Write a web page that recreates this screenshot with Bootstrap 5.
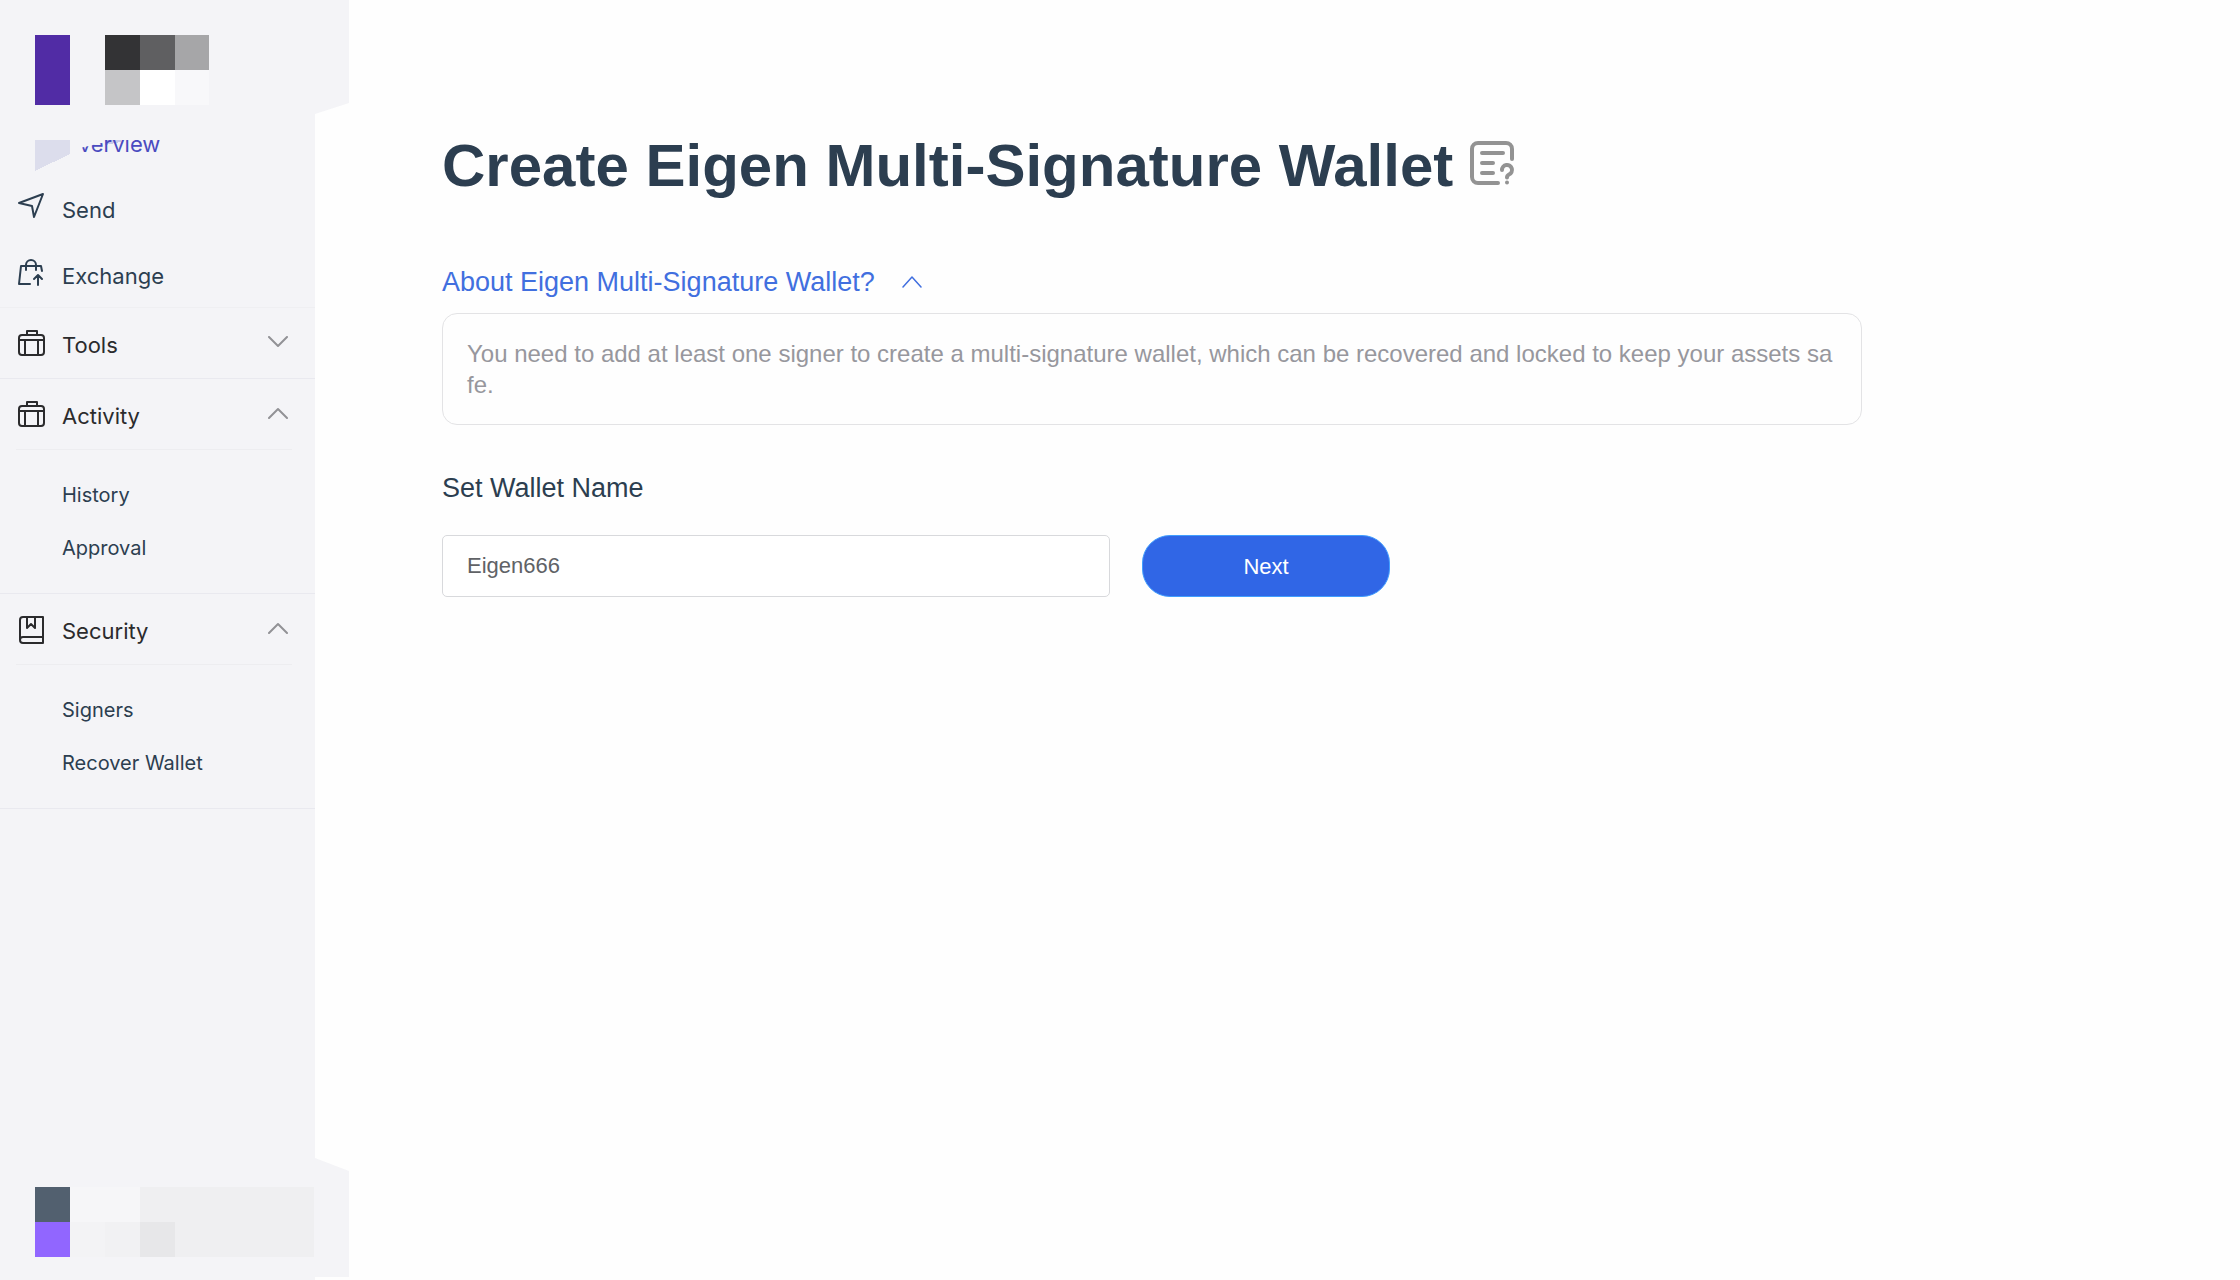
<!DOCTYPE html>
<html lang="en">
<head>
<meta charset="utf-8">
<meta name="viewport" content="width=device-width, initial-scale=1">
<title>Create Eigen Multi-Signature Wallet</title>
<link rel="stylesheet" href="https://cdn.jsdelivr.net/npm/bootstrap@5.3.0/dist/css/bootstrap.min.css">
<style>
  body { font-family: "Liberation Sans", Arial, sans-serif; color: #2c3e50; background: #fefefe; }
  .side { width: 349px; background: #f4f4f7; font-family: Inter, sans-serif; font-size: 22px; line-height: 32px;
    clip-path: polygon(0 0, 349px 0, 349px 103px, 315px 114px, 315px calc(100% - 122px), 349px calc(100% - 109px), 349px calc(100% - 3px), 315px calc(100% - 3px), 315px 100%, 0 100%); }
  .side-nav { width: 315px; }
  .brand { height: 109px; padding: 35px 35px 0; }
  .account { padding: 0 35px 23px; }
  .side a { color: #2c3e50; text-decoration: none; }
  .side-link { height: 66px; padding: 3px 15px 0; gap: 16px; }
  .side .side-current { color: #4a4bc0; }
  .side-current span { clip-path: polygon(20px 20px, 42px 15px, 42px 12px, 100% 12px, 100% 100%, 20px 100%); }
  .side-fold { position: absolute; left: 35px; top: 31px; }
  .side-group { border-bottom: 1px solid #e9e9ef; }
  .side-first { border-top: 1px solid #efeff2; }
  .side-toggle { height: 70px; padding: 3px 15px 0; gap: 16px; color: #2b2b2d; background: none; border: 0; }
  .side-chev { margin: 0 12px 6px auto; color: #929296; }
  .side-sub { margin: 0 23px 0 16px; padding: 18px 0 19px 46px; border-top: 1px solid #ededf0; font-size: 20px; }
  .side-sub a { height: 53px; }
  .side-icon { width: 31px; height: 31px; flex: none; }
  svg { display: block; fill: none; stroke: currentColor; stroke-linecap: round; stroke-linejoin: round; }
  .side-link svg.side-icon { margin-bottom: 4px; }
  .tiles { stroke: none; shape-rendering: crispEdges; }

  .content { padding: 130px 94px 0 93px; }
  .content-in { max-width: 1420px; }
  .page-title { font-size: 60px; line-height: 72px; font-weight: 700; }
  .title-help { color: #939393; margin-bottom: 6px; }
  .about { color: #416fdf; font-size: 27px; line-height: 32px; margin-top: 64px; gap: 27px; }
  .about-text { margin-top: 15px; padding: 24px; border: 1px solid #e3e3e5; border-radius: 15px; color: #97979d; font-size: 24px; line-height: 31px; word-break: break-all; }
  .name-label { font-size: 27px; line-height: 32px; margin-top: 47px; }
  .name-row { margin-top: 31px; gap: 32px; }
  .name-row .form-control { flex: 0 1 668px; height: 62px; padding: 0 24px; font-size: 22px; color: #606266; border-color: #d8d9dc; border-radius: 5px; background: #fff; }
  .name-row .btn { width: 248px; height: 62px; font-size: 22px; border-radius: 28px; --bs-btn-bg: #3066e6; --bs-btn-border-color: #409eff; }
</style>
<script src="https://cdn.jsdelivr.net/npm/bootstrap@5.3.0/dist/js/bootstrap.bundle.min.js"></script>
</head>
<body>
<div class="d-flex min-vh-100">
  <aside class="side d-flex flex-column flex-shrink-0">
    <div class="brand">
      <svg class="tiles" width="174" height="70" viewBox="0 0 174 70" aria-hidden="true">
        <path fill="#512ca5" d="M0 0h35v70H0z"/><path fill="#333335" d="M70 0h35v35H70z"/><path fill="#5f5f61" d="M105 0h35v35h-35z"/><path fill="#a6a6a8" d="M140 0h34v35h-34z"/>
        <path fill="#c5c5c7" d="M70 35h35v35H70z"/><path fill="#fff" d="M105 35h35v35h-35z"/><path fill="#f8f8fa" d="M140 35h34v35h-34z"/>
      </svg>
    </div>
    <nav class="side-nav">
      <a href="#" class="side-link side-current d-flex align-items-center position-relative">
        <svg class="side-fold tiles" width="87" height="32" viewBox="0 0 87 32" aria-hidden="true"><path fill="#dcddec" d="M0 0h35v14L0 31z"/><path fill="#c9caea" d="M70 0h16v2L70 5z"/></svg>
        <i class="side-icon"></i><span>Overview</span>
      </a>
      <a href="#" class="side-link d-flex align-items-center">
        <svg class="side-icon" viewBox="0 0 31 31" stroke-width="2"><path d="M4 11 28 2 19 25 17 14z"/></svg>Send
      </a>
      <a href="#" class="side-link d-flex align-items-center">
        <svg class="side-icon" viewBox="0 0 31 31" stroke-width="2"><path d="M15 26H4L6 8h20l1 5M11 12V7a5 5 0 0 1 10 0v5M23 27V18M19 21l4-4 4 4"/></svg>Exchange
      </a>
      <div class="side-group side-first">
        <button class="side-toggle d-flex align-items-center w-100" type="button" aria-expanded="false">
          <svg class="side-icon" viewBox="0 0 31 31" stroke-width="2"><rect x="4" y="6" width="25" height="20" rx="3"/><path d="M12 6V2h10v4M4 11h25M10 11v15M23 11v15"/></svg>Tools
          <svg class="side-chev" width="20" height="12" viewBox="0 0 20 12" stroke-width="2"><path d="m1 1 9 9 9-9"/></svg>
        </button>
      </div>
      <div class="side-group">
        <button class="side-toggle d-flex align-items-center w-100" type="button" aria-expanded="true">
          <svg class="side-icon" viewBox="0 0 31 31" stroke-width="2"><rect x="4" y="6" width="25" height="20" rx="3"/><path d="M12 6V2h10v4M4 11h25M10 11v15M23 11v15"/></svg>Activity
          <svg class="side-chev" width="20" height="12" viewBox="0 0 20 12" stroke-width="2"><path d="m1 11 9-9 9 9"/></svg>
        </button>
        <div class="side-sub">
          <a href="#" class="d-flex align-items-center">History</a>
          <a href="#" class="d-flex align-items-center">Approval</a>
        </div>
      </div>
      <div class="side-group">
        <button class="side-toggle d-flex align-items-center w-100" type="button" aria-expanded="true">
          <svg class="side-icon" viewBox="0 0 31 31" stroke-width="2"><path d="M8 2h20v26H8a3 3 0 0 1-3-3V5a3 3 0 0 1 3-3zM28 22v6M5 25a3 3 0 0 1 3-3h20M12 2v11l4-4 4 4V2"/></svg>Security
          <svg class="side-chev" width="20" height="12" viewBox="0 0 20 12" stroke-width="2"><path d="m1 11 9-9 9 9"/></svg>
        </button>
        <div class="side-sub">
          <a href="#" class="d-flex align-items-center">Signers</a>
          <a href="#" class="d-flex align-items-center">Recover Wallet</a>
        </div>
      </div>
    </nav>
    <div class="account mt-auto">
      <svg class="tiles" width="279" height="70" viewBox="0 0 279 70" aria-hidden="true">
        <path fill="#52606f" d="M0 0h35v35H0z"/><path fill="#9166ff" d="M0 35h35v35H0z"/><path fill="#f6f6f8" d="M35 0h70v35H35z"/><path fill="#f3f3f5" d="M35 35h35v35H35z"/><path fill="#f1f1f3" d="M70 35h35v35H70z"/><path fill="#efeff1" d="M105 0h174v70H105z"/><path fill="#e7e7e9" d="M105 35h35v35h-35z"/>
      </svg>
    </div>
  </aside>
  <main class="content flex-grow-1">
    <div class="content-in">
      <div class="d-flex align-items-center gap-3">
        <h1 class="page-title mb-0">Create Eigen Multi-Signature Wallet</h1>
        <svg class="title-help" width="46" height="46" viewBox="0 0 46 46" stroke-width="4" role="img" aria-label="Help"><path d="M43 19V9a6 6 0 0 0-6-6H9a6 6 0 0 0-6 6v28a6 6 0 0 0 6 6h20M13 13h21M13 23h11M13 33h11"/><path d="M33 30a5 5 0 1 1 7 4.500q-2 1-2 3M38 42.500v.1"/></svg>
      </div>
      <a href="#about" class="about d-flex align-items-center text-decoration-none" data-bs-toggle="collapse" aria-expanded="true">About Eigen Multi-Signature Wallet?
        <svg width="20" height="12" viewBox="0 0 20 12" stroke-width="1.500"><path d="m1 11 9-10 9 10"/></svg></a>
      <div class="collapse show" id="about"><div class="about-text">You need to add at least one signer to create a multi-signature wallet, which can be recovered and locked to keep your assets safe.</div></div>
      <form>
        <label class="name-label d-block" for="walletName">Set Wallet Name</label>
        <div class="name-row d-flex">
          <input class="form-control" type="text" id="walletName" value="Eigen666">
          <button class="btn btn-primary" type="button">Next</button>
        </div>
      </form>
    </div>
  </main>
</div>
</body>
</html>
